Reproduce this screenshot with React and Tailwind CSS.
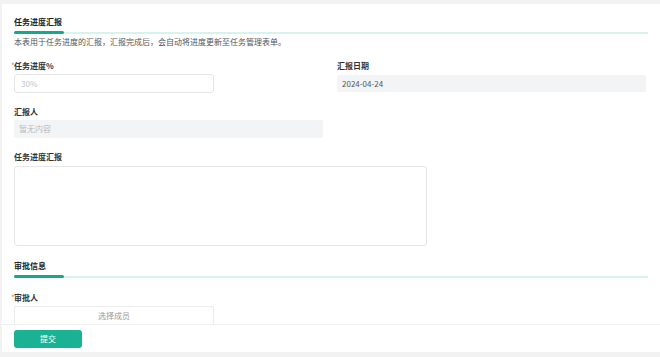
import React from 'react';

const FONT = { fontFamily: '"Noto Sans CJK SC", "Noto Sans", sans-serif' };

function SectionTitle({ title }) {
    return (
        <div>
            <div className="text-[8px] leading-[12px] font-bold text-[#222]">{title}</div>
            <div className="relative mt-[3px] h-[3px] mr-[12px]">
                <div className="absolute left-0 right-0 top-[1px] h-[2px] bg-[#d6f3ee]"></div>
                <div className="absolute left-0 top-0 h-[3px] w-[50px] rounded-full bg-[#13a98a]"></div>
            </div>
        </div>
    );
}

function Label({ text, required }) {
    return (
        <div className="relative text-[8px] leading-[12px] font-bold text-[#333]">
            {required && <span className="absolute -left-[3px] top-0 text-[#f56c6c] font-normal">*</span>}
            {text}
        </div>
    );
}

export default function App() {
    return (
        <div className="w-[660px] h-[357px] bg-[#f2f2f2] pt-[4px] pb-[5px] flex flex-col" style={FONT}>
            <div className="ml-[2px] flex-1 bg-white flex flex-col overflow-hidden">
                {/* Form body */}
                <div className="flex-1 overflow-hidden pl-[12px] pt-[12px]">
                    <SectionTitle title="任务进度汇报" />
                    <div className="mt-[2px] text-[8px] leading-[12px] text-[#555]">
                        本表用于任务进度的汇报，汇报完成后，会自动将进度更新至任务管理表单。
                    </div>

                    <div className="mt-[12px] grid grid-cols-[309px_309px] gap-x-[14px]">
                        <div>
                            <Label text="任务进度%" required />
                            <div className="mt-[2px] w-[200px] h-[19px] border border-[#e6e6e6] rounded-[3px] px-[6px] flex items-center text-[8px] text-[#c0c4cc]">
                                30%
                            </div>
                        </div>
                        <div>
                            <Label text="汇报日期" />
                            <div className="mt-[3px] h-[17px] bg-[#f3f4f6] rounded-[2px] px-[5px] flex items-center text-[8px] text-[#555]">
                                2024-04-24
                            </div>
                        </div>
                    </div>

                    <div className="mt-[13px]">
                        <Label text="汇报人" />
                        <div className="mt-[2px] w-[309px] h-[18px] bg-[#f3f4f6] rounded-[2px] px-[5px] flex items-center text-[8px] text-[#bbb]">
                            暂无内容
                        </div>
                    </div>

                    <div className="mt-[13px]">
                        <Label text="任务进度汇报" />
                        <div className="mt-[3px] w-[413px] h-[80px] border border-[#e6e6e6] rounded-[3px]"></div>
                    </div>

                    <div className="mt-[14px]">
                        <SectionTitle title="审批信息" />
                    </div>

                    <div className="mt-[14px]">
                        <Label text="审批人" required />
                        <div className="mt-[2px] w-[200px] h-[19px] border border-[#ececec] rounded-[2px] flex items-center justify-center text-[8px] text-[#999]">
                            选择成员
                        </div>
                    </div>
                </div>

                {/* Footer */}
                <div className="h-[28px] shrink-0 border-t border-[#f0f0f0] pl-[12px] flex items-center">
                    <button className="w-[68px] h-[18px] rounded-[3px] bg-[#19b393] text-white text-[8px] flex items-center justify-center">
                        提交
                    </button>
                </div>
            </div>
        </div>
    );
}
